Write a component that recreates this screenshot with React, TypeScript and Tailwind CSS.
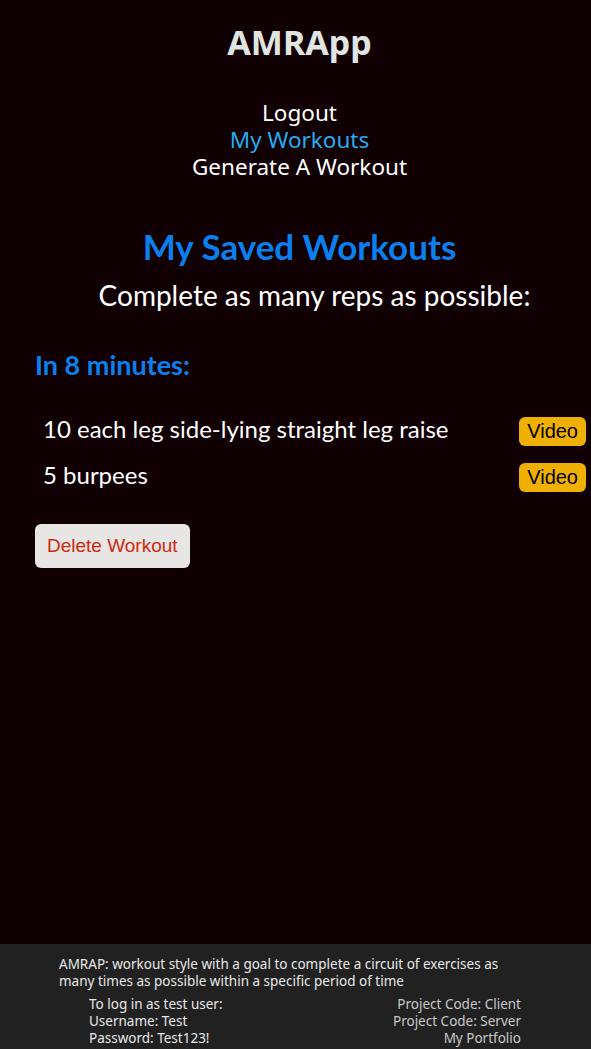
import React from 'react';

const exercises = [
  { id: 1, text: '10 each leg side-lying straight leg raise' },
  { id: 2, text: '5 burpees' },
];

const headFont = "font-['Noto_Sans','Open_Sans',sans-serif]";
const bodyFont = "font-['Lato','Noto_Sans',sans-serif]";

const App = () => {
  return (
    <div className="min-h-screen flex flex-col bg-[#100003] text-white">
      <header className={`${headFont} flex flex-col items-center pt-[20px]`}>
        <h1 className="text-[34px] font-bold text-[#e1e5e1] leading-[44px] pl-[8px]">AMRApp</h1>
        <nav className="flex flex-col items-center mt-[35px] text-[22.5px] leading-[27px] pl-[8px]">
          <a className="text-white">Logout</a>
          <a className="text-[#27aaf0]">My Workouts</a>
          <a className="text-white">Generate A Workout</a>
        </nav>
      </header>

      <main className={`${bodyFont} flex-1 flex flex-col`}>
        <h2 className="text-center text-[35px] font-bold text-[#0a80f0] mt-[46px] leading-[40px] pl-[8px]">
          My Saved Workouts
        </h2>
        <p className="text-center text-[28px] mt-[12px] leading-[34px] pl-[38px]">
          Complete as many reps as possible:
        </p>

        <section className="px-[35px] mt-[36px]">
          <h3 className="text-[27px] font-bold text-[#0a80f0] leading-[34px]">In 8 minutes:</h3>
          <ul className="mt-[32px] flex flex-col gap-[17px] pl-[8px] -mr-[30px]">
            {exercises.map((ex) => (
              <li key={ex.id} className="flex h-[29px] items-center justify-between">
                <span className="text-[24px] leading-[29px]">{ex.text}</span>
                <button className="mt-[6px] font-['Liberation_Sans',Arial,sans-serif] bg-[#f0b000] text-black text-[20px] leading-[23px] px-[8px] py-[3px] rounded-[6px]">
                  Video
                </button>
              </li>
            ))}
          </ul>
          <button className="mt-[35px] font-['Liberation_Sans',Arial,sans-serif] bg-[#e8e6e5] text-[#d02a0c] text-[19px] leading-[22px] px-[12px] py-[11px] rounded-[6px]">
            Delete Workout
          </button>
        </section>
      </main>

      <footer className={`${headFont} bg-[#212121] text-[#e8e8e8] text-[13.5px] leading-[17px] pt-[12px] pb-[2px]`}>
        <p className="pl-[59px] pr-[80px]">
          AMRAP: workout style with a goal to complete a circuit of exercises as many times as possible within a specific period of time
        </p>
        <div className="flex justify-between pl-[89px] pr-[70px] mt-[6px]">
          <div className="flex flex-col">
            <span>To log in as test user:</span>
            <span>Username: Test</span>
            <span>Password: Test123!</span>
          </div>
          <div className="flex flex-col items-end text-[#c8c8c8]">
            <a>Project Code: Client</a>
            <a>Project Code: Server</a>
            <a>My Portfolio</a>
          </div>
        </div>
      </footer>
    </div>
  );
};

export default App;
